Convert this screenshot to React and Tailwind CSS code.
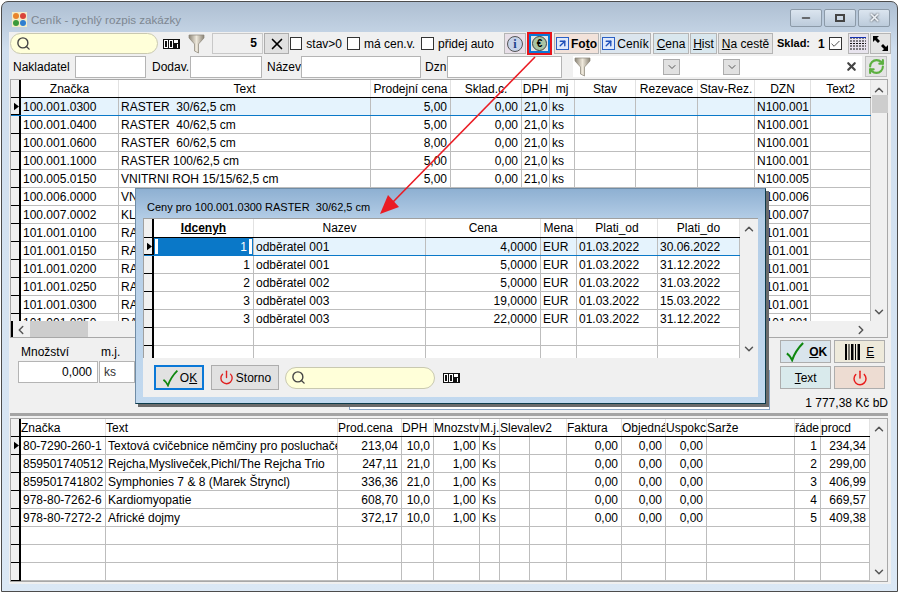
import React from "react";
import { Search, Power, ChevronUp, ChevronDown, ChevronLeft, ChevronRight, X, Check, RefreshCw, ArrowUpRight, Minus } from "lucide-react";

const mainCols = "grid grid-cols-[10px_98px_252px_80px_71px_28px_25px_61px_62px_57px_56px_60px]";
const lowerCols = "grid grid-cols-[10px_85px_232px_64px_32px_46px_20px_30px_37px_55px_44px_41px_88px_26px_49px]";
const dialogCols = "grid grid-cols-[10px_100px_172px_115px_36px_81px_82px]";

const mainHeader = ["Značka", "Text", "Prodejní cena", "Sklad.c.", "DPH", "mj", "Stav", "Rezevace", "Stav-Rez.", "DZN", "Text2"];
const mainAlign = ["l", "l", "r", "r", "r", "l", "l", "l", "l", "l", "l"];
const mk = (a, b, c, d) => [a, b, c, "0,00", "21,0", "ks", "", "", "", d, ""];
const under = (a, b, d) => [a, b, "", "", "", "", "", "", "", d, ""];
const mainRows = [
  mk("100.001.0300", "RASTER  30/62,5 cm", "5,00", "N100.001"),
  mk("100.001.0400", "RASTER  40/62,5 cm", "5,00", "N100.001"),
  mk("100.001.0600", "RASTER  60/62,5 cm", "8,00", "N100.001"),
  mk("100.001.1000", "RASTER 100/62,5 cm", "5,00", "N100.001"),
  mk("100.005.0150", "VNITRNI ROH 15/15/62,5 cm", "5,00", "N100.005"),
  // tyhle radky jsou z vetsi casti pod dialogem
  under("100.006.0000", "VN", "N100.006"),
  under("100.007.0002", "KL", "N100.007"),
  under("101.001.0100", "RA", "N101.001"),
  under("101.001.0150", "RA", "N101.001"),
  under("101.001.0200", "RA", "N101.001"),
  under("101.001.0250", "RA", "N101.001"),
  under("101.001.0300", "RA", "N101.001"),
  under("101.001.0350", "RA", "N101.001"),
];

const lowerHeader = ["Značka", "Text", "Prod.cena", "DPH", "Mnozstvi", "M.j.", "Slevas", "lev2", "Faktura", "Objedná", "Uspokc", "Sarže", "řáde", "procd"];
const lowerAlign = ["l", "l", "r", "r", "r", "l", "l", "l", "r", "r", "r", "l", "r", "r"];
const lo = (a, b, c, d, n, p) => [a, b, c, d, "1,00", "Ks", "", "", "0,00", "0,00", "0,00", "", n, p];
const lowerRows = [
  lo("80-7290-260-1", "Textová cvičebnice němčiny pro posluchače", "213,04", "10,0", "1", "234,34"),
  lo("859501740512", "Rejcha,Mysliveček,Pichl/The Rejcha Trio", "247,11", "21,0", "2", "299,00"),
  lo("859501741802", "Symphonies 7 & 8 (Marek Štryncl)", "336,36", "21,0", "3", "406,99"),
  lo("978-80-7262-6", "Kardiomyopatie", "608,70", "10,0", "4", "669,57"),
  lo("978-80-7272-2", "Africké dojmy", "372,17", "10,0", "5", "409,38"),
  Array(14).fill(""),
  Array(14).fill(""),
  Array(14).fill(""),
];

const dialogHeader = ["Idcenyh", "Nazev", "Cena", "Mena", "Plati_od", "Plati_do"];
const dialogAlign = ["r", "l", "r", "l", "l", "l"];
const dialogRows = [
  ["1", "odběratel 001", "4,0000", "EUR", "01.03.2022", "30.06.2022"],
  ["1", "odběratel 001", "5,0000", "EUR", "01.03.2022", "31.12.2022"],
  ["2", "odběratel 002", "5,0000", "EUR", "01.03.2022", "31.03.2022"],
  ["3", "odběratel 003", "19,0000", "EUR", "01.03.2022", "15.03.2022"],
  ["3", "odběratel 003", "22,0000", "EUR", "01.03.2022", "31.12.2022"],
  Array(6).fill(""),
  Array(6).fill(""),
];

const Pointer = () => (
  <svg width="6" height="9" viewBox="0 0 6 9" className="ml-[3px]"><path d="M0 0 L6 4.5 L0 9 Z" fill="#000" /></svg>
);

// Radek tabulky, stejny pro vsechny tri gridy
const GridRow = ({ cols, cells, aligns, selected, focusFirst, pointer }) => (
  <div className={`${cols} h-[18px] ${selected ? "bg-[#e5f3fd] border-b border-r border-[#0a78c8]" : ""}`}>
    <div className="flex items-center bg-[#f0f0f0] border-r-2 border-b border-black">{pointer && <Pointer />}</div>
    {cells.map((c, i) => (
      <div
        key={i}
        className={`relative overflow-hidden whitespace-pre pl-[2px] pr-[3px] leading-[19px] ${selected ? "" : "border-b border-[#bdbdbd]"} border-r border-[#bdbdbd] ${aligns[i] === "r" ? "text-right" : "text-left"} ${focusFirst && i === 0 ? "bg-[#0a78c8] text-white pr-[6px]" : ""}`}
      >
        {focusFirst && i === 0 && <span className="absolute left-[1px] top-[1px] w-[3px] h-[15px] bg-white" />}
        {focusFirst && i === 0 && <span className="absolute right-[1px] top-[1px] w-[3px] h-[15px] bg-white" />}
        {c}
      </div>
    ))}
  </div>
);

const HeaderRow = ({ cols, cells, center = true, boldFirst, rowClass = "h-[18px]" }) => (
  <div className={`${cols} ${rowClass} border-b border-black`}>
    <div className="bg-[#f0f0f0] border-r-2 border-black" />
    {cells.map((c, i) => (
      <div
        key={i}
        className={`overflow-hidden whitespace-nowrap leading-[18px] border-r border-[#e2e2e2] ${center ? "text-center" : "text-left"} ${boldFirst && i === 0 ? "font-bold underline" : ""}`}
      >
        {c}
      </div>
    ))}
  </div>
);

const VScroll = ({ thumb }) => (
  <div className="flex flex-col justify-between items-center bg-[#f0f0f0] w-full h-full pt-[3px] pb-[2px] relative">
    <ChevronUp size={14} strokeWidth={2.5} className="text-[#555]" />
    {thumb && <div className="absolute top-[15px] left-[1px] w-[16px] h-[18px] bg-[#cdcdcd]" />}
    <ChevronDown size={14} strokeWidth={2.5} className="text-[#555]" />
  </div>
);

const Counter = () => (
  <svg width="17" height="10" viewBox="0 0 17 10" className="shrink-0">
    <rect width="17" height="10" fill="#111" />
    <rect x="1.5" y="1.5" width="3" height="7" fill="none" stroke="#fff" />
    <rect x="6.5" y="1.5" width="3" height="7" fill="none" stroke="#fff" />
    <rect x="11" y="1" width="4" height="3" fill="#fff" />
    <rect x="14" y="5" width="1" height="4" fill="#fff" />
  </svg>
);

const Funnel = () => (
  <svg width="17" height="22" viewBox="0 0 17 22" className="shrink-0">
    <defs>
      <linearGradient id="fn" x1="0" x2="1" y1="0" y2="0">
        <stop offset="0" stopColor="#8c8577" />
        <stop offset="0.5" stopColor="#efe9dc" />
        <stop offset="1" stopColor="#8a8375" />
      </linearGradient>
    </defs>
    <path d="M1 2 H16 L16 5 L10.5 11 V20 L6.5 18 V11 L1 5 Z" fill="url(#fn)" stroke="#8b8579" strokeWidth="0.7" />
  </svg>
);

const SearchPill = ({ className }) => (
  <div className={`flex items-center rounded-full bg-[#ffffd9] border border-[#c9c9b0] pl-[5px] ${className}`}>
    <Search size={15} strokeWidth={2.2} className="text-[#444]" />
  </div>
);

const CheckBox = ({ label, checked, className = "" }) => (
  <div className={`flex items-center gap-[4px] shrink-0 whitespace-nowrap ${className}`}>
    <div className="w-[13px] h-[13px] bg-white border border-[#333] flex items-center justify-center">
      {checked && <Check size={12} strokeWidth={1.5} />}
    </div>
    {label && <span>{label}</span>}
  </div>
);

const Swoosh = ({ size = 22 }) => (
  <svg width={size} height={size} viewBox="0 0 22 22" className="shrink-0">
    <path d="M3 13 Q6 15 8.5 20 Q12 10 20 2" fill="none" stroke="#0f870f" strokeWidth="2.2" />
  </svg>
);

const LinkBox = () => (
  <span className="w-[13px] h-[13px] border border-[#2a5fc4] bg-[#dfe9fb] flex items-center justify-center shrink-0">
    <ArrowUpRight size={11} strokeWidth={3} className="text-[#1d4fb8]" />
  </span>
);

const ToolBtn = ({ className, children }) => (
  <div className={`h-[21px] shrink-0 flex items-center justify-center border border-[#b5b5b5] whitespace-nowrap ${className}`}>{children}</div>
);

const TextField = ({ className, children }) => (
  <div className={`h-[22px] bg-white border border-[#b4b4b4] leading-[20px] ${className}`}>{children}</div>
);

const ComboBtn = ({ className }) => (
  <div className={`w-[17px] h-[16px] bg-[#e1e1e1] border border-[#adadad] flex items-center justify-center ${className}`}>
    <ChevronDown size={12} className="text-[#555]" />
  </div>
);

const Logo = () => (
  <svg width="15" height="15" viewBox="0 0 15 15" className="shrink-0">
    <rect width="15" height="15" fill="#f4edc8" />
    <circle cx="4" cy="4" r="3" fill="#e8842c" />
    <circle cx="11" cy="4" r="3" fill="#d9443a" />
    <circle cx="4" cy="11" r="3" fill="#3b9a3b" />
    <circle cx="11" cy="11" r="3" fill="#2f7fd0" />
  </svg>
);

const WinBtn = ({ children, className = "" }) => (
  <div className={`w-[32px] h-[18px] rounded-[2px] border border-[#8c9aa8] bg-gradient-to-b from-[#dbe5ef] to-[#bccbdb] flex items-center justify-center text-[#444] ${className}`}>
    {children}
  </div>
);

const Dialog = () => (
  <div className="absolute left-[135px] top-[188px] w-[631px] h-[216px] z-10 flex flex-col bg-gradient-to-b from-[#8eb0d2] via-[#b4cde6] via-[14%] to-[#c2d9ef] border border-[#0d3c4c] border-t-[#6f8ca6] border-l-[#6f8ca6] shadow-[3px_3px_0_#6b6b6b] px-[7px] pb-[6px]">
    <div className="h-[29px] shrink-0 pt-[11px] pl-[4px] text-[11px] leading-[15px] whitespace-pre">Ceny pro 100.001.0300 RASTER  30/62,5 cm</div>
    <div className="h-[140px] shrink-0 flex bg-white border-l border-t border-[#a0a0a0] overflow-hidden">
      <div className="w-[596px] shrink-0 overflow-hidden">
        <HeaderRow cols={dialogCols} cells={dialogHeader} boldFirst rowClass="h-[19px]" />
        {dialogRows.map((r, i) => (
          <GridRow key={i} cols={dialogCols} cells={r} aligns={dialogAlign} selected={i === 0} focusFirst={i === 0} pointer={i === 0} />
        ))}
      </div>
      <div className="flex-1 flex justify-center">
        <VScroll />
      </div>
    </div>
    <div className="flex-1 bg-[#f0f0f0] flex items-center pl-[11px]">
      <div className="w-[50px] h-[25px] bg-[#e1e1e1] border-2 border-[#0a78d7] flex items-center justify-center gap-[1px]">
        <Swoosh size={18} />
        <span>O<u>K</u></span>
      </div>
      <div className="ml-[7px] w-[68px] h-[25px] bg-[#e1e1e1] border border-[#adadad] flex items-center justify-center gap-[2px]">
        <Power size={15} strokeWidth={2.2} className="text-[#e02020]" />
        <span>Storno</span>
      </div>
      <SearchPill className="ml-[6px] w-[150px] h-[22px]" />
      <div className="ml-[8px]"><Counter /></div>
    </div>
  </div>
);

export default function App() {
  return (
    <div className="relative w-[902px] h-[594px] overflow-hidden bg-white text-[12px] text-black font-['Liberation_Sans',Arial,sans-serif]">
      <div className="ml-[1px] mt-[1px] w-[897px] h-[591px] flex flex-col rounded-t-[7px] border border-[#4c4c4c] bg-gradient-to-b from-[#aebfd2] via-[#cfdeee] via-[8%] to-[#dbe8f5] pl-[7px] pr-[6px] pb-[7px]">
        {/* title bar */}
        <div className="h-[30px] shrink-0 flex items-center pl-[3px] pt-[5px]">
          <Logo />
          <span className="ml-[4px] text-[11.6px] text-[#7d8791]">Ceník - rychlý rozpis zakázky</span>
          <div className="ml-auto flex gap-[2px] mr-[1px] -mt-[4px]">
            <WinBtn><Minus size={12} strokeWidth={3} /></WinBtn>
            <WinBtn><span className="w-[10px] h-[8px] border-2 border-[#444]" /></WinBtn>
            <WinBtn><X size={13} strokeWidth={3} className="text-[#eef3f8] drop-shadow-[0_0_1px_#333]" /></WinBtn>
          </div>
        </div>

        <div className="flex-1 flex flex-col bg-[#f0f0f0] pl-px overflow-hidden">
          {/* toolbar */}
          <div className="h-[23px] shrink-0 flex items-center">
            <SearchPill className="w-[148px] h-[21px] shrink-0" />
            <div className="ml-[5px]"><Counter /></div>
            <div className="ml-[8px]"><Funnel /></div>
            <div className="ml-[7px] w-[51px] h-[21px] shrink-0 border border-[#c8c8c8] text-right font-bold pr-[5px] leading-[19px]">5</div>
            <div className="ml-[1px] w-[25px] h-[21px] shrink-0 bg-[#e1e1e1] border border-[#adadad] flex items-center justify-center">
              <X size={18} strokeWidth={2.2} />
            </div>
            <CheckBox label="stav>0" className="ml-[1px] w-[52px]" />
            <CheckBox label="má cen.v." className="ml-[5px] w-[70px]" />
            <CheckBox label="přidej auto" className="ml-[4px] w-[78px]" />
            <ToolBtn className="ml-[5px] w-[22px] bg-[#e8dfe8]">
              <span className="w-[16px] h-[16px] rounded-full border border-[#555] bg-[#c5d2e8] text-[#1d3f8a] font-bold font-['Liberation_Serif',serif] text-[12px] leading-[14px] text-center">i</span>
            </ToolBtn>
            <div className="ml-px w-[25px] h-[23px] shrink-0 border-2 border-[#e8141c] flex">
              <div className="flex-1 border-2 border-[#0a78d7] bg-[#e4e4e4] flex items-center justify-center">
                <span className="w-[15px] h-[15px] rounded-full border border-[#444] bg-[#a9c4a4] text-[10px] font-bold leading-[13px] text-center">€</span>
              </div>
            </div>
            <ToolBtn className="ml-[2px] w-[45px] bg-[#f2e2da] gap-[2px] font-bold"><LinkBox /><span>Fo<u>t</u>o</span></ToolBtn>
            <ToolBtn className="ml-px w-[51px] bg-[#dbe5ee] gap-[2px]"><LinkBox /><span>Ceník</span></ToolBtn>
            <ToolBtn className="ml-[2px] w-[36px] bg-[#d9e7ee]"><span><u>C</u>ena</span></ToolBtn>
            <ToolBtn className="ml-[1px] w-[27px] bg-[#d9e7ee]"><span><u>H</u>ist</span></ToolBtn>
            <ToolBtn className="ml-[1px] w-[55px] bg-[#e4e4e4]"><span><u>N</u>a cestě</span></ToolBtn>
            <span className="ml-[4px] font-bold text-[11px]">Sklad:</span>
            <span className="ml-[8px] font-bold">1</span>
            <CheckBox checked className="ml-[4px]" />
            <ToolBtn className="ml-[6px] w-[21px] bg-[#e8e4ee]">
              <svg width="16" height="13" viewBox="0 0 16 13">
                <path d="M0 1 H16 M0 4 H16 M0 6.5 H16 M0 9 H16 M0 12 H16" stroke="#111" strokeDasharray="2 1" />
                <path d="M0 .5 H16" stroke="#1430b0" />
              </svg>
            </ToolBtn>
            <ToolBtn className="ml-[1px] w-[21px] bg-[#e4e4e4]">
              <svg width="15" height="15" viewBox="0 0 15 15">
                <path d="M0 0 H6 L4 2 L7 5 L5 7 L2 4 L0 6 Z" fill="#000" />
                <path d="M15 15 H9 L11 13 L8 10 L10 8 L13 11 L15 9 Z" fill="#000" />
              </svg>
            </ToolBtn>
          </div>

          {/* filtry */}
          <div className="h-[23px] shrink-0 flex items-center">
            <span className="ml-[3px] w-[62px]">Nakladatel</span>
            <TextField className="w-[71px]" />
            <span className="ml-[6px] w-[38px]">Dodav.</span>
            <TextField className="w-[72px]" />
            <span className="ml-[5px] w-[34px]">Název</span>
            <TextField className="w-[120px]" />
            <span className="ml-[4px] w-[22px]">Dzn</span>
            <TextField className="w-[115px]" />
            <div className="ml-[11px] w-[289px] h-[21px] bg-white flex items-center pl-[1px]">
              <Funnel />
              <ComboBtn className="ml-[72px]" />
              <ComboBtn className="ml-[43px]" />
              <X size={13} strokeWidth={4} className="ml-auto mr-[4px] text-[#444]" />
            </div>
            <div className="ml-[3px] w-[22px] h-[21px] bg-[#e4e4e4] border border-[#c0c0c0] flex items-center justify-center">
              <RefreshCw size={17} strokeWidth={3} className="text-[#5cb040]" />
            </div>
          </div>

          {/* hlavni tabulka */}
          <div className="mt-[1px] w-[878px] h-[259px] shrink-0 bg-white border border-[#a8a8a8] flex flex-col">
            <div className="flex h-[241px]">
              <div className="w-[860px] overflow-hidden">
                <HeaderRow cols={mainCols} cells={mainHeader} />
                {mainRows.map((r, i) => (
                  <GridRow key={i} cols={mainCols} cells={r} aligns={mainAlign} selected={i === 0} pointer={i === 0} />
                ))}
              </div>
              <div className="flex-1"><VScroll thumb /></div>
            </div>
            <div className="flex h-[17px] bg-[#f0f0f0]">
              <div className="w-[2px] bg-black" />
              <ChevronLeft size={14} strokeWidth={2.5} className="ml-[1px] mt-[2px] text-[#555]" />
              <div className="ml-[2px] w-[58px] bg-[#cdcdcd]" />
              <div className="w-[780px] flex justify-end">
                <ChevronRight size={14} strokeWidth={2.5} className="mt-[2px] text-[#555]" />
              </div>
            </div>
          </div>

          {/* stredni panel */}
          <div className="h-[78px] shrink-0 w-[878px] flex border-b-[3px] border-[#a4a4a4]">
            <div className="ml-[8px] pt-[7px]">
              <div className="pl-[3px] leading-[15px]">Množství</div>
              <TextField className="mt-[1px] w-[80px] text-right pr-[5px]">0,000</TextField>
            </div>
            <div className="ml-px pt-[7px]">
              <div className="pl-[2px] leading-[15px]">m.j.</div>
              <TextField className="mt-[1px] w-[36px] pl-[4px] text-[#333]">ks</TextField>
            </div>
            <div className="ml-[214px] self-end mb-[3px] w-[422px] h-[40px] bg-white border border-[#8aa6c6]" />
            <div className="ml-[10px] pt-[2px] w-[108px]">
              <div className="grid grid-cols-[51px_51px] gap-x-[3px] gap-y-[3px]">
                <div className="h-[23px] bg-[#d9e4ec] border border-[#adadad] flex items-center justify-center gap-[4px] font-bold">
                  <Swoosh size={21} />
                  <span><u>O</u>K</span>
                </div>
                <div className="h-[23px] bg-[#eeeadb] border border-[#adadad] flex items-center justify-center gap-[6px]">
                  <svg width="15" height="16" viewBox="0 0 15 16">
                    <path d="M0 0 H2 V16 H0 Z M3.5 0 H4.5 V16 H3.5 Z M6 0 H8.5 V16 H6 Z M10 0 H11 V16 H10 Z M12.5 0 H15 V16 H12.5 Z" fill="#000" />
                  </svg>
                  <u>E</u>
                </div>
                <div className="h-[23px] bg-[#d9eaec] border border-[#adadad] flex items-center justify-center"><span><u>T</u>ext</span></div>
                <div className="h-[23px] bg-[#eddcd2] border border-[#adadad] flex items-center justify-center">
                  <Power size={16} strokeWidth={2.2} className="text-[#e81c1c]" />
                </div>
              </div>
              <div className="mt-[5px] text-right whitespace-nowrap">1 777,38 Kč bD</div>
            </div>
          </div>

          {/* spodni tabulka */}
          <div className="mt-[2px] w-[878px] h-[164px] shrink-0 bg-white border border-[#a8a8a8] flex overflow-hidden">
            <div className="w-[859px] overflow-hidden">
              <HeaderRow cols={lowerCols} cells={lowerHeader} center={false} />
              {lowerRows.map((r, i) => (
                <GridRow key={i} cols={lowerCols} cells={r} aligns={lowerAlign} pointer={i === 0} />
              ))}
            </div>
            <div className="flex-1"><VScroll /></div>
          </div>
        </div>
      </div>

      <Dialog />

      {/* cervena sipka */}
      <svg className="absolute left-0 top-0 z-20 pointer-events-none" width="902" height="594" viewBox="0 0 902 594">
        <path d="M535 57 L392 203" stroke="#ea1c24" strokeWidth="1.6" fill="none" />
        <path d="M380 214 L388 195 L399 207 Z" fill="#ea1c24" />
      </svg>
    </div>
  );
}
